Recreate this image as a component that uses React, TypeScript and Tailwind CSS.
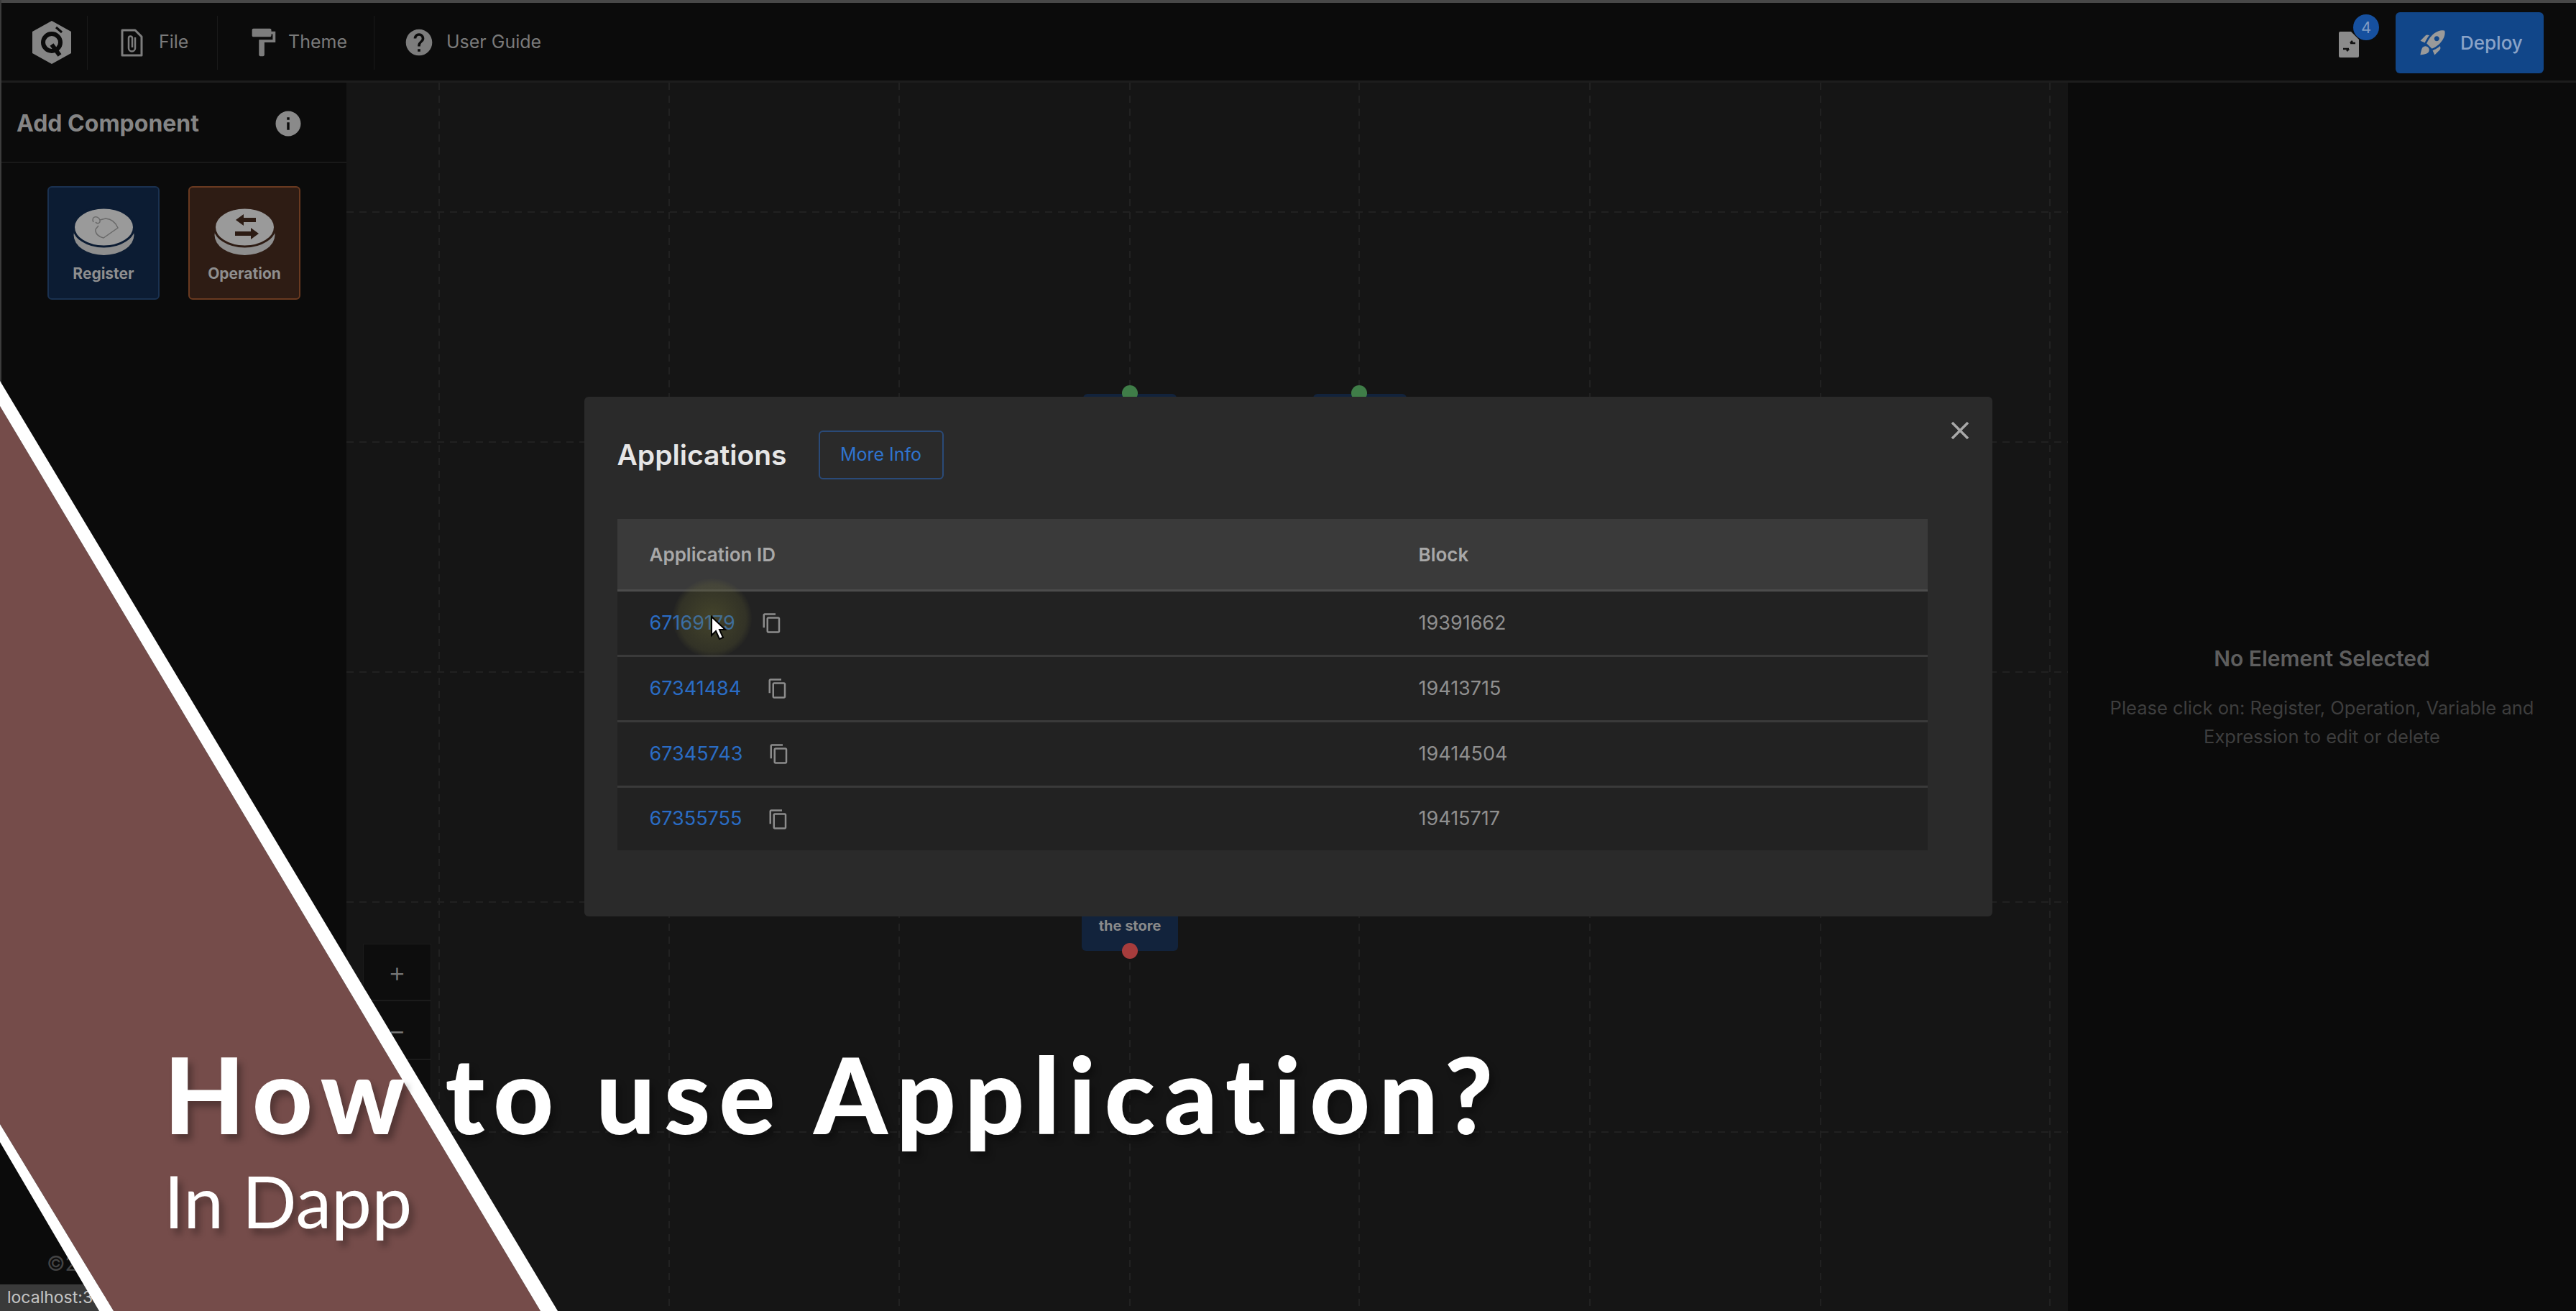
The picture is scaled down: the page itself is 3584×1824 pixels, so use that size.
import { MdClose, MdContentCopy, MdFormatPaint, MdHelp, MdInfo, MdRocketLaunch } from 'react-icons/md'

const rows = [
  { id: '67169179', block: '19391662' },
  { id: '67341484', block: '19413715' },
  { id: '67345743', block: '19414504' },
  { id: '67355755', block: '19415717' },
]

const gridX = [129, 449, 769, 1090, 1409, 1730, 2051, 2370]
const gridY = [180, 500, 820, 1140, 1460]

function Logo() {
  return (
    <svg width="54" height="60" viewBox="0 0 54 60">
      <polygon points="27,0 54,15 54,45 27,60 0,45 0,15" fill="#858585" />
      <circle cx="27" cy="30" r="12" fill="none" stroke="#0b0b0b" strokeWidth="6" />
      <path d="M27 33 L38 48" stroke="#0b0b0b" strokeWidth="6" />
      <path d="M33 9 L41 16" stroke="#0b0b0b" strokeWidth="3" />
    </svg>
  )
}

function FileClipIcon() {
  return (
    <svg width="31" height="39" viewBox="0 0 31 39" fill="none">
      <path d="M2 2 H20 L29 11 V37 H2 Z" stroke="#7d7d7d" strokeWidth="3" strokeLinejoin="round" />
      <path d="M20 12 V27 a4.5 4.5 0 0 1 -9 0 V13 a2.5 2.5 0 0 1 5 0 V26" stroke="#7d7d7d" strokeWidth="2.5" />
    </svg>
  )
}

function TxIcon() {
  return (
    <svg width="30" height="36" viewBox="0 0 30 36">
      <path d="M3 0 H18 L29 11 V34 a2 2 0 0 1 -2 2 H3 a2 2 0 0 1 -2 -2 V2 a2 2 0 0 1 2 -2 Z" fill="#8b8b8b" />
      <path d="M17 16 H24 M17 16 L20 13 M7 24 H15 M15 24 L12 27" stroke="#111" strokeWidth="2.5" fill="none" />
    </svg>
  )
}

function DiscIcon({ stroke, kind }: { stroke: string; kind: 'register' | 'operation' }) {
  return (
    <svg width="85" height="66" viewBox="0 0 85 66" fill="none">
      <ellipse cx="42.5" cy="38" rx="42" ry="28" fill="#8e8e8e" />
      <ellipse cx="42.5" cy="27" rx="42" ry="27" fill="#9a9a9a" stroke={stroke} strokeWidth="3" />
      {kind === 'register' ? (
        <path
          d="M28 20 C24 12 34 10 37 17 C38 22 33 23 31 20 M37 17 L45 15 C55 16 60 23 62 28 L42 42 C36 41 30 36 31 30 L35 25"
          stroke="#6a6a6a"
          strokeWidth="1.5"
        />
      ) : (
        <g fill="#2c1b13">
          <path d="M30 17 L41 9 V14 H58 V20 H41 V25 Z" />
          <path d="M62 36 L51 28 V33 H29 V39 H51 V44 Z" />
        </g>
      )}
    </svg>
  )
}

function Overlay() {
  return (
    <svg className="absolute inset-0 pointer-events-none" width="3584" height="1824" viewBox="0 0 3584 1824">
      <polygon points="0,565 752,1824 158,1824 0,1564" fill="#754c4a" />
      <polygon points="0,530 776,1824 752,1824 0,565" fill="#ffffff" />
      <polygon points="0,1564 158,1824 138,1824 0,1589" fill="#ffffff" />
    </svg>
  )
}

export default function App() {
  return (
    <div className="relative w-[3584px] h-[1824px] overflow-hidden flex flex-col bg-[#0b0b0b] font-['Inter',sans-serif]">
      {/* top bar */}
      <header className="h-[115px] shrink-0 flex items-center pt-[2px] border-t-[4px] border-b-[3px] border-t-[#484848] border-b-[#1d1d1d] text-[25px] text-[#7a7a7a]">
        <div className="w-[122px] h-[75px] flex items-center pl-[45px] border-r border-[#1a1a1a]">
          <Logo />
        </div>
        <div className="w-[181px] h-[75px] flex items-center gap-[22px] pl-[46px] border-r border-[#1a1a1a]">
          <FileClipIcon />
          <span>File</span>
        </div>
        <div className="w-[218px] h-[75px] flex items-center gap-[12px] pl-[40px] border-r border-[#1a1a1a]">
          <MdFormatPaint size={46} color="#7d7d7d" />
          <span>Theme</span>
        </div>
        <div className="h-[75px] flex items-center gap-[16px] pl-[40px]">
          <MdHelp size={44} color="#7d7d7d" />
          <span>User Guide</span>
        </div>
        <div className="ml-auto flex items-center mr-[45px]">
          <div className="relative mr-[50px] mt-[6px]">
            <TxIcon />
            <span className="absolute left-[21px] top-[-24px] w-[36px] h-[36px] rounded-full bg-[#16509f] text-[#7e9bc4] text-[22px] flex items-center justify-center">
              4
            </span>
          </div>
          <button className="w-[206px] h-[85px] rounded-[6px] bg-[#114689] flex items-center gap-[17px] pl-[31px] text-[#8aa3c8] text-[26px] font-medium">
            <MdRocketLaunch size={42} color="#9a9a9a" />
            Deploy
          </button>
        </div>
      </header>

      <div className="flex flex-1 min-h-0">
        {/* left panel */}
        <aside className="w-[482px] shrink-0 flex flex-col bg-[#0b0b0b]">
          <div className="h-[112px] flex items-center justify-between pl-[23px] pr-[60px] pt-[4px] border-b-[2px] border-[#191919]">
            <span className="text-[32px] font-bold text-[#858585]">Add Component</span>
            <MdInfo size={42} color="#8a8a8a" />
          </div>
          <div className="flex gap-[40px] pl-[66px] pt-[32px]">
            <div className="w-[156px] h-[158px] rounded-[6px] border-[2px] border-[#1a3150] bg-[#0c1c33] flex flex-col items-center pt-[28px] gap-[10px]">
              <DiscIcon stroke="#0c1c33" kind="register" />
              <span className="text-[21px] font-bold text-[#8f8f8f]">Register</span>
            </div>
            <div className="w-[156px] h-[158px] rounded-[6px] border-[2px] border-[#6a3a20] bg-[#2e1c14] flex flex-col items-center pt-[28px] gap-[10px]">
              <DiscIcon stroke="#2e1c14" kind="operation" />
              <span className="text-[21px] font-bold text-[#8f8f8f]">Operation</span>
            </div>
          </div>
          <div className="mt-auto pl-[65px] pb-[8px] text-[28px] text-[#444444]">©2024</div>
          <div className="h-[37px] w-[200px] bg-[#3a3a3a] text-[23px] leading-[37px] pl-[10px] text-[#c4c4c4]">localhost:3000</div>
        </aside>

        {/* canvas */}
        <main className="relative flex-1 bg-[#151515]">
          <svg className="absolute inset-0" width="2395" height="1709">
            {gridX.map((x) => (
              <line key={x} x1={x} y1="0" x2={x} y2="1709" stroke="#212121" strokeWidth="2" strokeDasharray="10 8" />
            ))}
            {gridY.map((y) => (
              <line key={y} x1="0" y1={y} x2="2395" y2={y} stroke="#212121" strokeWidth="2" strokeDasharray="10 8" />
            ))}
          </svg>
          <div className="absolute left-[1025px] top-[433px] w-[130px] h-[30px] rounded-[6px] bg-[#12233c]" />
          <div className="absolute left-[1345px] top-[433px] w-[130px] h-[30px] rounded-[6px] bg-[#12233c]" />
          <div className="absolute left-[1079px] top-[421px] w-[22px] h-[22px] rounded-full bg-[#3f7d48]" />
          <div className="absolute left-[1398px] top-[421px] w-[22px] h-[22px] rounded-full bg-[#3f7d48]" />
          <div className="absolute left-[1023px] top-[1140px] w-[134px] h-[68px] rounded-[6px] bg-[#12233c] flex justify-center pt-[21px] text-[20px] leading-[24px] font-bold text-[#8a8a8a]">
            the store
          </div>
          <div className="absolute left-[1079px] top-[1197px] w-[22px] h-[22px] rounded-full bg-[#a63c3c]" />
          <div className="absolute left-[23px] top-[1198px] w-[95px] flex flex-col bg-[#0d0d0d] border border-[#1b1b1b] text-[#777777]">
            <div className="h-[79px] flex items-center justify-center text-[38px] font-light border-b-[2px] border-[#1b1b1b]">+</div>
            <div className="h-[82px] flex items-center justify-center text-[38px] font-light border-b-[2px] border-[#1b1b1b]">−</div>
            <div className="h-[82px]" />
          </div>
        </main>

        {/* right panel */}
        <aside className="w-[707px] shrink-0 flex flex-col items-center justify-center bg-[#0b0b0b]">
          <div className="text-[30px] font-semibold text-[#5e5e5e] mb-[26px]">No Element Selected</div>
          <p className="w-[620px] text-center text-[25.5px] leading-[40px] text-[#3e3e3e]">
            Please click on: Register, Operation, Variable and Expression to edit or delete
          </p>
        </aside>
      </div>

      <div className="absolute left-0 top-0 w-[2px] h-[540px] bg-[#3c3c3c]" />

      {/* modal */}
      <div className="absolute inset-0 flex items-center justify-center pt-[3px]">
        <div className="relative w-[1959px] rounded-[6px] bg-[#2a2a2a] pt-[47px] px-[46px] pb-[92px]">
          <div className="flex items-center gap-[46px] h-[68px] mb-[55px]">
            <span className="w-[234px] text-[39px] font-semibold text-[#e6e6e6] whitespace-nowrap">Applications</span>
            <button className="w-[174px] h-[68px] rounded-[6px] border-[2px] border-[#2a4a78] text-[25px] text-[#2f74cf]">More Info</button>
          </div>
          <button className="absolute right-[24px] top-[26px] text-[#a8a8a8]">
            <MdClose size={42} />
          </button>
          <div className="w-[1823px] bg-[#222222]">
            <div className="grid grid-cols-[1115px_1fr] h-[101px] items-center bg-[#3a3a3a] border-b-[3px] border-[#4c4c4c] text-[26px] font-semibold text-[#a8a8a8]">
              <span className="pl-[45px]">Application ID</span>
              <span>Block</span>
            </div>
            {rows.map((row, i) => (
              <div
                key={row.id}
                className={
                  i < rows.length - 1
                    ? 'grid grid-cols-[1115px_1fr] h-[91px] items-center border-b-[3px] border-[#3a3a3a] text-[27px]'
                    : 'grid grid-cols-[1115px_1fr] h-[87px] items-center text-[27px]'
                }
              >
                <div className="flex items-center gap-[36px] pl-[45px]">
                  <span className="text-[#2a6cc4]">{row.id}</span>
                  <MdContentCopy size={30} color="#8c8c8c" />
                </div>
                <span className="text-[#8f8f8f]">{row.block}</span>
              </div>
            ))}
          </div>
          {/* recording highlight and pointer */}
          <div className="absolute left-[123px] top-[253px] w-[110px] h-[110px] rounded-full bg-[radial-gradient(circle,rgba(115,115,55,0.42),rgba(115,115,55,0.2)_60%,transparent_72%)]" />
          <svg className="absolute left-[175px] top-[304px]" width="24" height="36" viewBox="0 0 24 36">
            <path d="M2 2 V28 L8 22 L13 33 L18 31 L13 20 L21 20 Z" fill="#ffffff" stroke="#000000" strokeWidth="2" />
          </svg>
        </div>
      </div>

      <Overlay />

      {/* video title */}
      <div className="absolute left-[228px] top-[1434px] font-['Lato',sans-serif] text-white [text-shadow:6px_8px_10px_rgba(0,0,0,0.3)]">
        <div className="text-[146px] leading-[176px] font-black tracking-[12px] whitespace-nowrap">How to use Application?</div>
        <div className="mt-[2px] text-[100px] leading-[116px] whitespace-nowrap">In Dapp</div>
      </div>
    </div>
  )
}
